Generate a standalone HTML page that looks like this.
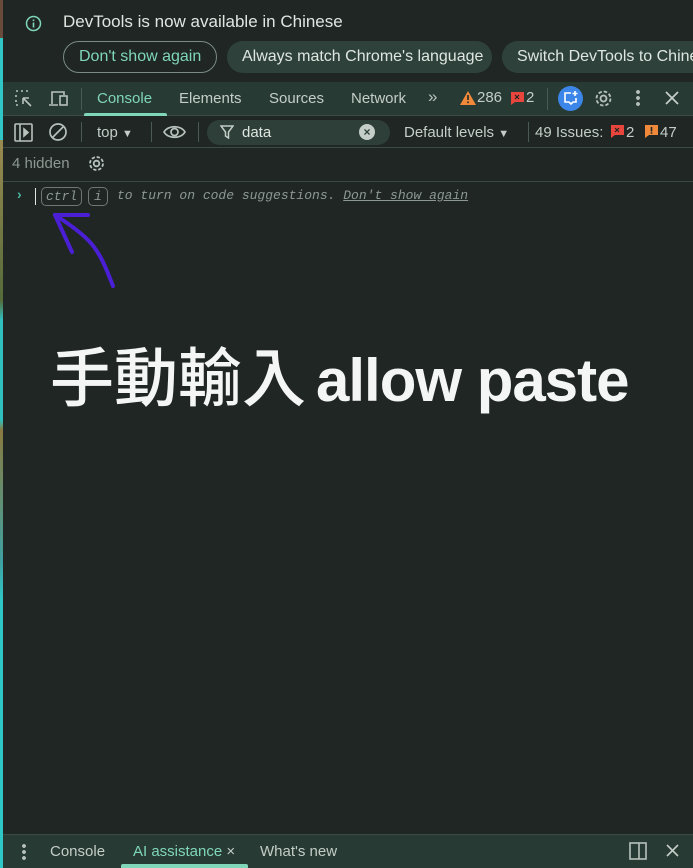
<!DOCTYPE html>
<html><head><meta charset="utf-8"><style>
*{margin:0;padding:0;box-sizing:border-box}
body{width:693px;height:868px;overflow:hidden;background:#1f2624;font-family:"Liberation Sans","Noto Sans CJK TC",sans-serif;color:#c4cdc8;position:relative}
.strip{position:absolute;left:0;top:0;width:3px;height:868px;background:linear-gradient(#6a4a3a 0,#6a4a3a 38px,#31c6c6 38px,#31c6c6 140px,#9a8a50 140px,#556b3a 300px,#2fbfbf 320px,#2fbfbf 420px,#8a7a40 430px,#3fa0a0 560px,#2fc6c6 600px,#2fc6c6 868px)}
.abs{position:absolute;white-space:nowrap}
.pill{position:absolute;top:41px;height:32px;border-radius:16px;font-size:16px;line-height:32px;padding:0 15px;white-space:nowrap;overflow:hidden}
.row{position:absolute;left:3px;right:0}
.mono{font-family:"Liberation Mono",monospace;font-style:italic;font-size:13px;color:#8e9893}
</style></head><body>
<div class="strip"></div>
<svg class="abs" style="left:25px;top:15px" width="17" height="17"><circle cx="8.5" cy="8.5" r="7" fill="none" stroke="#7fd6b8" stroke-width="1.5"/><rect x="7.7" y="7.5" width="1.6" height="5" fill="#7fd6b8"/><rect x="7.7" y="4.5" width="1.6" height="1.6" fill="#7fd6b8"/></svg>
<div class="abs" style="left:63px;top:12px;font-size:17px;color:#dfe6e2">DevTools is now available in Chinese</div>
<div class="pill" style="left:63px;width:154px;border:1px solid #7a8a84;color:#7fd6b8;line-height:30px">Don't show again</div>
<div class="pill" style="left:227px;width:265px;background:#2e423b;color:#dfe6e2">Always match Chrome's language</div>
<div class="pill" style="left:502px;width:210px;background:#2e423b;color:#dfe6e2">Switch DevTools to Chinese</div>
<div class="row" style="top:82px;height:34px;background:#283a34;border-bottom:1px solid #3c4a45"></div>
<svg class="abs" style="left:14px;top:89px" width="20" height="20" fill="none" stroke="#b8c2bd" stroke-width="1.6"><path d="M2 2h2M7 2h2M12 2h2M2 6v2M2 11v2M2 16h2" /><path d="M9 9l8 8M9 9h6M9 9v6"/></svg>
<svg class="abs" style="left:48px;top:89px" width="22" height="20" fill="none" stroke="#b8c2bd" stroke-width="1.6"><path d="M4 15V3h12v3M1 16h9"/><rect x="12" y="7" width="7" height="9"/></svg>
<div class="abs" style="left:81px;top:88px;width:1px;height:22px;background:#4a5a54"></div>
<div class="abs" style="left:97px;top:90px;font-size:15px;color:#7fd6b8">Console</div>
<div class="abs" style="left:84px;top:113px;width:83px;height:3px;background:#7fd6b8;border-radius:2px 2px 0 0"></div>
<div class="abs" style="left:179px;top:90px;font-size:15px;color:#c4cdc8">Elements</div>
<div class="abs" style="left:269px;top:90px;font-size:15px;color:#c4cdc8">Sources</div>
<div class="abs" style="left:351px;top:90px;font-size:15px;color:#c4cdc8">Network</div>
<div class="abs" style="left:428px;top:87px;font-size:17px;color:#b8c2bd">»</div>
<svg class="abs" style="left:460px;top:91px" width="16" height="14"><path d="M8 0L16 14H0z" fill="#f08a3a"/><rect x="7.2" y="4" width="1.6" height="5" fill="#1f2624"/><rect x="7.2" y="10.5" width="1.6" height="1.6" fill="#1f2624"/></svg>
<div class="abs" style="left:477px;top:89px;font-size:15px;color:#c4cdc8">286</div>
<svg class="abs" style="left:511px;top:92px" width="13" height="13"><path d="M0 0h13v10H4l-4 3z" fill="#e8463c"/><path d="M4 3l4 4M8 3l-4 4" stroke="#1f2624" stroke-width="1.2"/></svg>
<div class="abs" style="left:526px;top:89px;font-size:15px;color:#c4cdc8">2</div>
<div class="abs" style="left:547px;top:88px;width:1px;height:22px;background:#4a5a54"></div>
<div class="abs" style="left:558px;top:86px;width:25px;height:25px;border-radius:50%;background:#3b86e8"></div>
<svg class="abs" style="left:563px;top:91px" width="15" height="15" fill="none" stroke="#fff" stroke-width="1.6"><path d="M8 2H2v9h4l2 2 2-2h3V7"/><path d="M12 0v5M9.5 2.5h5"/></svg>
<svg class="abs" style="left:593px;top:88px" width="21" height="21" fill="none" stroke="#b8c2bd" stroke-width="1.8"><circle cx="10.5" cy="10.5" r="3"/><circle cx="10.5" cy="10.5" r="7" stroke-dasharray="3.5 2"/></svg>
<div class="abs" style="left:636px;top:89px;width:4px;height:18px;background:radial-gradient(circle,#b8c2bd 1.8px,transparent 2px) 0 0/4px 6px"></div>
<svg class="abs" style="left:665px;top:91px" width="14" height="14" stroke="#c4cdc8" stroke-width="1.8"><path d="M1 1l12 12M13 1L1 13"/></svg>
<div class="row" style="top:116px;height:32px;background:#1f2624;border-bottom:1px solid #3c4a45"></div>
<svg class="abs" style="left:14px;top:123px" width="19" height="19" fill="none" stroke="#b8c2bd" stroke-width="1.6"><rect x="1" y="1" width="17" height="17" rx="1"/><path d="M6 1v17"/><path d="M10 6l4 3.5-4 3.5z" fill="#b8c2bd"/></svg>
<svg class="abs" style="left:48px;top:122px" width="20" height="20" fill="none" stroke="#b8c2bd" stroke-width="1.7"><circle cx="10" cy="10" r="8"/><path d="M4.5 15.5l11-11"/></svg>
<div class="abs" style="left:81px;top:122px;width:1px;height:20px;background:#4a5a54"></div>
<div class="abs" style="left:97px;top:124px;font-size:15px;color:#c4cdc8">top <span style="font-size:11px">▼</span></div>
<div class="abs" style="left:151px;top:122px;width:1px;height:20px;background:#4a5a54"></div>
<svg class="abs" style="left:163px;top:123px" width="23" height="18" fill="none" stroke="#b8c2bd" stroke-width="1.7"><path d="M1 9C5 2 18 2 22 9 18 16 5 16 1 9z"/><circle cx="11.5" cy="9" r="3.5"/></svg>
<div class="abs" style="left:198px;top:122px;width:1px;height:20px;background:#4a5a54"></div>
<div class="abs" style="left:207px;top:120px;width:183px;height:25px;border-radius:13px;background:#2e3f39"></div>
<svg class="abs" style="left:220px;top:125px" width="14" height="14" fill="none" stroke="#c4cdc8" stroke-width="1.5"><path d="M1 1h12L8.5 7v6L5.5 11V7z"/></svg>
<div class="abs" style="left:242px;top:124px;font-size:15px;color:#dfe6e2">data</div>
<div class="abs" style="left:359px;top:124px;width:16px;height:16px;border-radius:50%;background:#c4cdc8;color:#2e3f39;font-size:12px;line-height:16px;text-align:center;font-weight:bold">×</div>
<div class="abs" style="left:404px;top:124px;font-size:15px;color:#c4cdc8">Default levels <span style="font-size:11px">▼</span></div>
<div class="abs" style="left:528px;top:122px;width:1px;height:20px;background:#4a5a54"></div>
<div class="abs" style="left:535px;top:124px;font-size:15px;color:#c4cdc8">49 Issues:</div>
<svg class="abs" style="left:611px;top:125px" width="13" height="13"><path d="M0 0h13v10H4l-4 3z" fill="#e8463c"/><path d="M4 3l4 4M8 3l-4 4" stroke="#1f2624" stroke-width="1.2"/></svg>
<div class="abs" style="left:626px;top:124px;font-size:15px;color:#c4cdc8">2</div>
<svg class="abs" style="left:645px;top:125px" width="13" height="13"><path d="M0 0h13v10H4l-4 3z" fill="#f08a3a"/><rect x="5.7" y="2" width="1.6" height="4.5" fill="#1f2624"/><rect x="5.7" y="7.3" width="1.6" height="1.5" fill="#1f2624"/></svg>
<div class="abs" style="left:660px;top:124px;font-size:15px;color:#c4cdc8">47</div>
<div class="abs" style="left:12px;top:155px;font-size:15px;color:#8e9893">4 hidden</div>
<svg class="abs" style="left:87px;top:154px" width="19" height="19" fill="none" stroke="#b8c2bd" stroke-width="1.8"><circle cx="9.5" cy="9.5" r="2.8"/><circle cx="9.5" cy="9.5" r="6.5" stroke-dasharray="3.3 1.8"/></svg>
<div class="row" style="top:181px;height:1px;background:#3c4a45"></div>
<div class="abs" style="left:17px;top:186px;font-size:14px;color:#4cb8a0;font-weight:bold">›</div>
<div class="abs" style="left:35px;top:188px;width:1px;height:17px;background:#dfe6e2"></div>
<div class="abs mono" style="left:41px;top:187px;height:19px;line-height:17px;border:1px solid #6e7873;border-radius:5px;padding:0 4px">ctrl</div>
<div class="abs mono" style="left:88px;top:187px;height:19px;line-height:17px;border:1px solid #6e7873;border-radius:5px;padding:0 5px">i</div>
<div class="abs mono" style="left:117px;top:188px">to turn on code suggestions. <span style="text-decoration:underline">Don't show again</span></div>
<svg class="abs" style="left:0;top:180px" width="140" height="120" fill="none" stroke="#4a1fd6" stroke-width="4" stroke-linecap="round" stroke-linejoin="round"><path d="M113 106C106 88 100 72 88 60 78 50 66 42 55 35"/><path d="M55 35L88 35M55 35L72 72"/></svg>
<div class="abs" style="left:50px;top:334px;font-size:64px;line-height:80px;color:#f4f6f5;font-family:'Noto Sans CJK TC',sans-serif;font-weight:500">手動輸入</div>
<div class="abs" style="left:316px;top:341px;font-size:60px;line-height:80px;color:#f4f6f5;font-weight:bold;letter-spacing:-1px">allow paste</div>
<div class="row" style="top:834px;height:34px;background:#283a34;border-top:1px solid #3c4a45"></div>
<div class="abs" style="left:22px;top:843px;width:4px;height:17px;background:radial-gradient(circle,#b8c2bd 1.8px,transparent 2px) 0 0/4px 6px"></div>
<div class="abs" style="left:50px;top:843px;font-size:15px;color:#c4cdc8">Console</div>
<div class="abs" style="left:133px;top:843px;font-size:15px;color:#7fd6b8">AI assistance <span style="color:#c4cdc8">×</span></div>
<div class="abs" style="left:121px;top:864px;width:127px;height:4px;background:#7fd6b8;border-radius:2px 2px 0 0"></div>
<div class="abs" style="left:260px;top:843px;font-size:15px;color:#c4cdc8">What's new</div>
<svg class="abs" style="left:629px;top:842px" width="18" height="18" fill="none" stroke="#b8c2bd" stroke-width="1.6"><rect x="1" y="1" width="16" height="16"/><path d="M10 1v16"/></svg>
<svg class="abs" style="left:666px;top:844px" width="13" height="13" stroke="#c4cdc8" stroke-width="1.6"><path d="M1 1l11 11M12 1L1 12"/></svg>
</body></html>
